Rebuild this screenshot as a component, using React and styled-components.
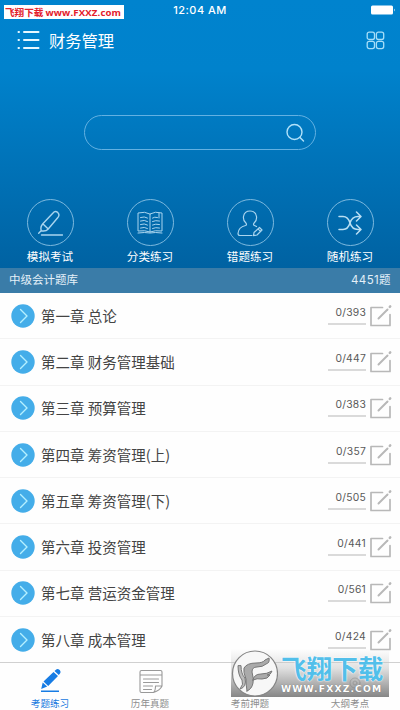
import React from "react";
import styled, { createGlobalStyle } from "styled-components";

const Global = createGlobalStyle`
  * { box-sizing: border-box; }
  body { margin: 0; background: #fff; }
`;
const Screen = styled.div`
  position: relative;
  width: 400px;
  height: 710px;
  overflow: hidden;
  display: flex;
  flex-direction: column;
  background: #fefefe;
  font-family: "Inter", "Noto Sans CJK SC", sans-serif;
  white-space: nowrap;
`;
const Hero = styled.header`
  height: 293px;
  flex: none;
  display: flex;
  flex-direction: column;
  background: linear-gradient(#0083ce 0, #0082cc 70px, #0062a2 268px, #005e9c 294px);
  color: #fff;
`;
const StatusBar = styled.div`
  height: 20px;
  flex: none;
  display: grid;
  grid-template-columns: 124px 1fr 124px;
  justify-items: center;
  font: 500 11px/20px "Inter", sans-serif;
  letter-spacing: 0.45px;
  svg { justify-self: end; margin: 5px 4px 0 0; }
`;
const SiteTag = styled.div`
  width: 120px;
  height: 14px;
  margin: 5px 0 0 4px;
  display: flex;
  gap: 2px;
  padding-left: 1px;
  background: #fff;
  color: #e3202b;
  font: 700 9.6px/15px "Open Sans", "Noto Sans CJK SC", sans-serif;
  letter-spacing: 0;
`;
const Address = styled.span`
  letter-spacing: 0.15px;
`;
const NavBar = styled.div`
  height: 40px;
  flex: none;
  display: flex;
  align-items: center;
  padding: 0 15px 0 17px;
`;
const Title = styled.h1`
  flex: 1;
  margin: -1px 0 0 9px;
  font: 400 16.3px/40px "Noto Sans CJK SC", sans-serif;
`;
const Search = styled.div`
  width: 232px;
  height: 35px;
  margin: 55px 0 0 84px;
  flex: none;
  display: flex;
  align-items: center;
  justify-content: flex-end;
  padding-right: 10px;
  border: 1.5px solid #63b1e2;
  border-radius: 18px;
`;
const Actions = styled.nav`
  height: 118px;
  flex: none;
  display: grid;
  grid-template-columns: repeat(4, 100px);
  padding-top: 49px;
`;
const Action = styled.div`
  display: flex;
  flex-direction: column;
  align-items: center;
  font: 400 11.6px/17px "Noto Sans CJK SC", sans-serif;
  gap: 2px;
`;
const Circle = styled.div`
  width: 47px;
  height: 47px;
  flex: none;
  display: flex;
  align-items: center;
  justify-content: center;
  border: 1px solid #7db9de;
  border-radius: 50%;
`;
const BankBar = styled.div`
  height: 25px;
  flex: none;
  display: flex;
  justify-content: space-between;
  padding: 0 9px;
  background: #3a7ca8;
  color: #e4f0f8;
  font: 400 11.5px/24px "Inter", "Noto Sans CJK SC", sans-serif;
`;
const Count = styled.span`
  letter-spacing: 0.4px;
`;
const List = styled.main`
  flex: 1;
  min-height: 0;
  overflow: hidden;
`;
const Row = styled.div`
  height: 46.3px;
  display: flex;
  align-items: center;
  padding: 0 7px 0 11px;
  border-bottom: 1px solid #f3f3f3;
`;
const Name = styled.div`
  flex: 1;
  margin-left: 6px;
  color: #444;
  font: 400 14.5px/22px "Noto Sans CJK SC", sans-serif;
`;
const Progress = styled.div`
  width: 38px;
  height: 20px;
  margin: -2px 3px 0 -4px;
  display: flex;
  justify-content: flex-end;
  border-bottom: 2px solid #dadada;
  color: #585858;
  font: 400 10.3px/14px "Inter", sans-serif;
  letter-spacing: 0.25px;
`;
const Tabs = styled.footer`
  height: 48px;
  flex: none;
  display: grid;
  grid-template-columns: repeat(4, 100px);
  border-top: 1px solid #d0d0d0;
  background: #fefefe;
`;
const Tab = styled.div`
  display: flex;
  flex-direction: column;
  align-items: center;
  gap: 2px;
  padding-top: 6px;
  color: ${(p) => (p.$active ? "#1679e0" : "#8e8e8e")};
  font: 400 9.6px/14px "Noto Sans CJK SC", sans-serif;
`;
const Watermark = styled.div`
  position: absolute;
  left: 231px;
  top: 649px;
  width: 158px;
  height: 48px;
  display: flex;
  gap: 3px;
  background: linear-gradient(rgba(210,210,210,0) 0, rgba(195,195,195,.5) 40%, rgba(125,125,125,.93));
`;
const Brand = styled.div`
  flex: 1;
  display: flex;
  flex-direction: column;
  padding-top: 4px;
`;
const BrandName = styled.div`
  height: 30px;
  color: #52bfea;
  font: 700 25.6px/30px "Noto Sans CJK SC", sans-serif;
  text-shadow: 0 0 2px #fff, 0 0 1px #fff;
`;
const BrandUrl = styled.div`
  height: 12px;
  color: #fff;
  font: 700 9.2px/12px "DejaVu Sans", sans-serif;
  letter-spacing: 1.15px;
  text-shadow: 0 0 1px #666;
`;

const Svg = ({ w, h, box, sw = 1, color = "currentColor", children }) => (
  <svg width={w} height={h} viewBox={box || `0 0 ${w} ${h}`} fill="none" stroke={color} strokeWidth={sw} strokeLinecap="round" strokeLinejoin="round">{children}</svg>
);

const Battery = () => (
  <Svg w={26} h={11} color="none"><rect x="1" y="0.5" width="22" height="9" rx="1.5" fill="#fff" /><path d="M24 3.5q1.5 1.5 0 3z" fill="#fff" /></Svg>
);
const MenuIcon = () => (
  <Svg w={23} h={22} sw={2} color="#e7f8ff"><path d="M1.500 3H2M7 3h14.500M1.500 11H2M7 11h14.500M1.500 19H2M7 19h14.500" /></Svg>
);
const GridIcon = () => (
  <Svg w={19} h={20} sw={1.3} color="#a6def8">
    <rect x="1.2" y="2.200" width="7.3" height="7.3" rx="2" /><rect x="10.4" y="2.200" width="7.3" height="7.3" rx="2" />
    <rect x="1.2" y="11.300" width="7.3" height="7.3" rx="2" /><rect x="10.4" y="11.300" width="7.3" height="7.3" rx="2" />
  </Svg>
);
const SearchIcon = () => (
  <Svg w={20} h={20} sw={1.4} color="#b1e2fa"><circle cx="9.500" cy="9" r="7.5" /><path d="m15 14.500 3.500 3.500" /></Svg>
);
const PenIcon = () => (
  <Svg w={26} h={28} sw={1.4} color="#a9d5ef">
    <path d="M16 4q2-2.500 4.700-.6 2.300 2.200.4 4.800L11 20.200q-2 2.400-6.700 1.600Q3 18 5.600 15zM6 15l5 4.800M4.300 21.500l-2.600 2.700M4.500 26h21" />
  </Svg>
);
const BookIcon = () => (
  <Svg w={26} h={24} color="#a9d5ef">
    <path d="M13 3Q8 0 1 2v18q7-1 12 1 5-2 12-1V2q-7-2-12 1v18M1 22q7-1 12 0 5-1 12 0" />
    <path d="M3.5 6.500q4-1.500 7 .5m-7 3q4-1.500 7 .5m-7 3q4-1.500 7 .5m-7 3q4-1.500 7 .5M15.500 7q2-1.500 5-.5m-5 4q3-1.500 7-.5m-7 4q3-1.500 7-.5m-7 4q3-1.500 7-.5M22 2v5" />
  </Svg>
);
const UserIcon = () => (
  <Svg w={26} h={28} sw={1.2} color="#a9d5ef">
    <path d="M15 26.500H3Q1 26.500 1 24.500 1.500 18 8.500 16.500q2-.7 0-3Q6 11 6.500 7.500 7.500 2 13 2t6.500 5.500q.5 3.500-2 6-2 2.300 0 3 1 .4 2 1" />
    <path d="m17 23.500 5.500-5 2.500 2.500-5 5-3.500.700zM21 19.800l2.500 2.500" />
  </Svg>
);
const ShuffleIcon = () => (
  <Svg w={24} h={24} sw={1.5} color="#b9dff4">
    <path d="M1 5.500h4q5 0 7 6.500t8 6.500h2.500M1 18.500h4q5 0 7-6.500t8-6.500h2.500M18.500 1l4.500 4.500-4.500 4.500M18.500 14l4.500 4.500-4.500 4.500" />
  </Svg>
);
const ArrowIcon = () => (
  <Svg w={24} h={24} sw={1.4} color="#b5f0ff"><circle cx="12" cy="12" r="11.7" fill="#44ade9" stroke="none" /><path d="m9.500 5.500 6.500 6.500-6.500 6.500" /></Svg>
);
const EditIcon = () => (
  <Svg w={24} h={24} sw={1.7} color="#b8b8b8">
    <path d="M13.500 3.500H2v18h19V10.500" /><path d="m9.500 14.500 9-9" strokeWidth="2" /><path d="m20.800 2.800.4-.4" strokeWidth="2.500" />
  </Svg>
);
const TabPen = () => (
  <Svg w={24} h={25} color="none">
    <g fill="#177ce4"><path d="m5.500 12.500 10-9.500 4.500 4-9.800 10zM16.500 2l1.700-1.500q1.500-1 3.500.5 1.500 1.800.3 3.500L20.800 6zM4.700 13.500l4.500 4-6 2.500z" /><path d="M3 21.500h18V23H3z" /></g>
  </Svg>
);
const TabPaper = () => (
  <Svg w={25} h={25} sw={1.1} color="#999"><path d="M15.500 23.500H3.500q-1.500 0-1.500-1.500V3q0-1.500 1.500-1.500h19Q24 1.500 24 3v14M2 6h22M5.500 10h15M5.500 13.500h15M5.500 17h9M5.500 20.500h8M15.500 23.500q2-1.500 2-6.500H24q-2 4.500-8.500 6.500" /></Svg>
);
const TabUser = () => (
  <Svg w={25} h={25} color="#ccc"><circle cx="12" cy="9" r="6" /><path d="M3 23q1-7 9-7t10 7" /></Svg>
);
const TabPoint = () => (
  <Svg w={25} h={25} color="#aaa"><circle cx="17" cy="14" r="5" /><circle cx="17" cy="14" r="2" /><path d="M3 22h18" /></Svg>
);
const Emblem = () => (
  <Svg w={47} h={48} color="#777">
    <circle cx="24" cy="24.500" r="22.500" fill="#f7f7f7" stroke="#858585" strokeWidth="1.200" />
    <path d="M7 17q0 9 4 14 2 4-2 9 7-2 5-11-4-4-4-12z" fill="#bbb" />
    <path d="M16 42q-1-6-1-12-3-7-2-11 3-5 12-5 7 0 9-3l4-2q1 5-3 6-3 3-9 3-5 0-5 5 2 7 1 11-1 6-6 8z" fill="#aaa" />
    <path d="M22 31q1-6 8-6 6 0 11-3-1 4-5 4 2 1 3 0-2 4-8 4-5-1-9 1z" fill="#aaa" />
  </Svg>
);

const actions = [[PenIcon, "模拟考试"], [BookIcon, "分类练习"], [UserIcon, "错题练习"], [ShuffleIcon, "随机练习"]];
const chapters = [
  ["第一章 总论", 393], ["第二章 财务管理基础", 447], ["第三章 预算管理", 383], ["第四章 筹资管理(上)", 357],
  ["第五章 筹资管理(下)", 505], ["第六章 投资管理", 441], ["第七章 营运资金管理", 561], ["第八章 成本管理", 424],
];
const tabs = [[TabPen, "考题练习"], [TabPaper, "历年真题"], [TabUser, "考前押题"], [TabPoint, "大纲考点"]];

export default function App() {
  return (
    <Screen>
      <Global />
      <Hero>
        <StatusBar>
          <SiteTag><span>飞翔下载</span><Address>www.FXXZ.com</Address></SiteTag>
          <span>12:04 AM</span>
          <Battery />
        </StatusBar>
        <NavBar><MenuIcon /><Title>财务管理</Title><GridIcon /></NavBar>
        <Search><SearchIcon /></Search>
        <Actions>
          {actions.map(([Icon, label]) => <Action key={label}><Circle><Icon /></Circle>{label}</Action>)}
        </Actions>
        <BankBar><span>中级会计题库</span><Count>4451题</Count></BankBar>
      </Hero>
      <List>
        {chapters.map(([name, total]) => (
          <Row key={name}><ArrowIcon /><Name>{name}</Name><Progress>0/{total}</Progress><EditIcon /></Row>
        ))}
      </List>
      <Tabs>
        {tabs.map(([Icon, label], i) => <Tab key={label} $active={i === 0}><Icon />{label}</Tab>)}
      </Tabs>
      <Watermark>
        <Emblem />
        <Brand><BrandName>飞翔下载</BrandName><BrandUrl>WWW.FXXZ.COM</BrandUrl></Brand>
      </Watermark>
    </Screen>
  );
}
